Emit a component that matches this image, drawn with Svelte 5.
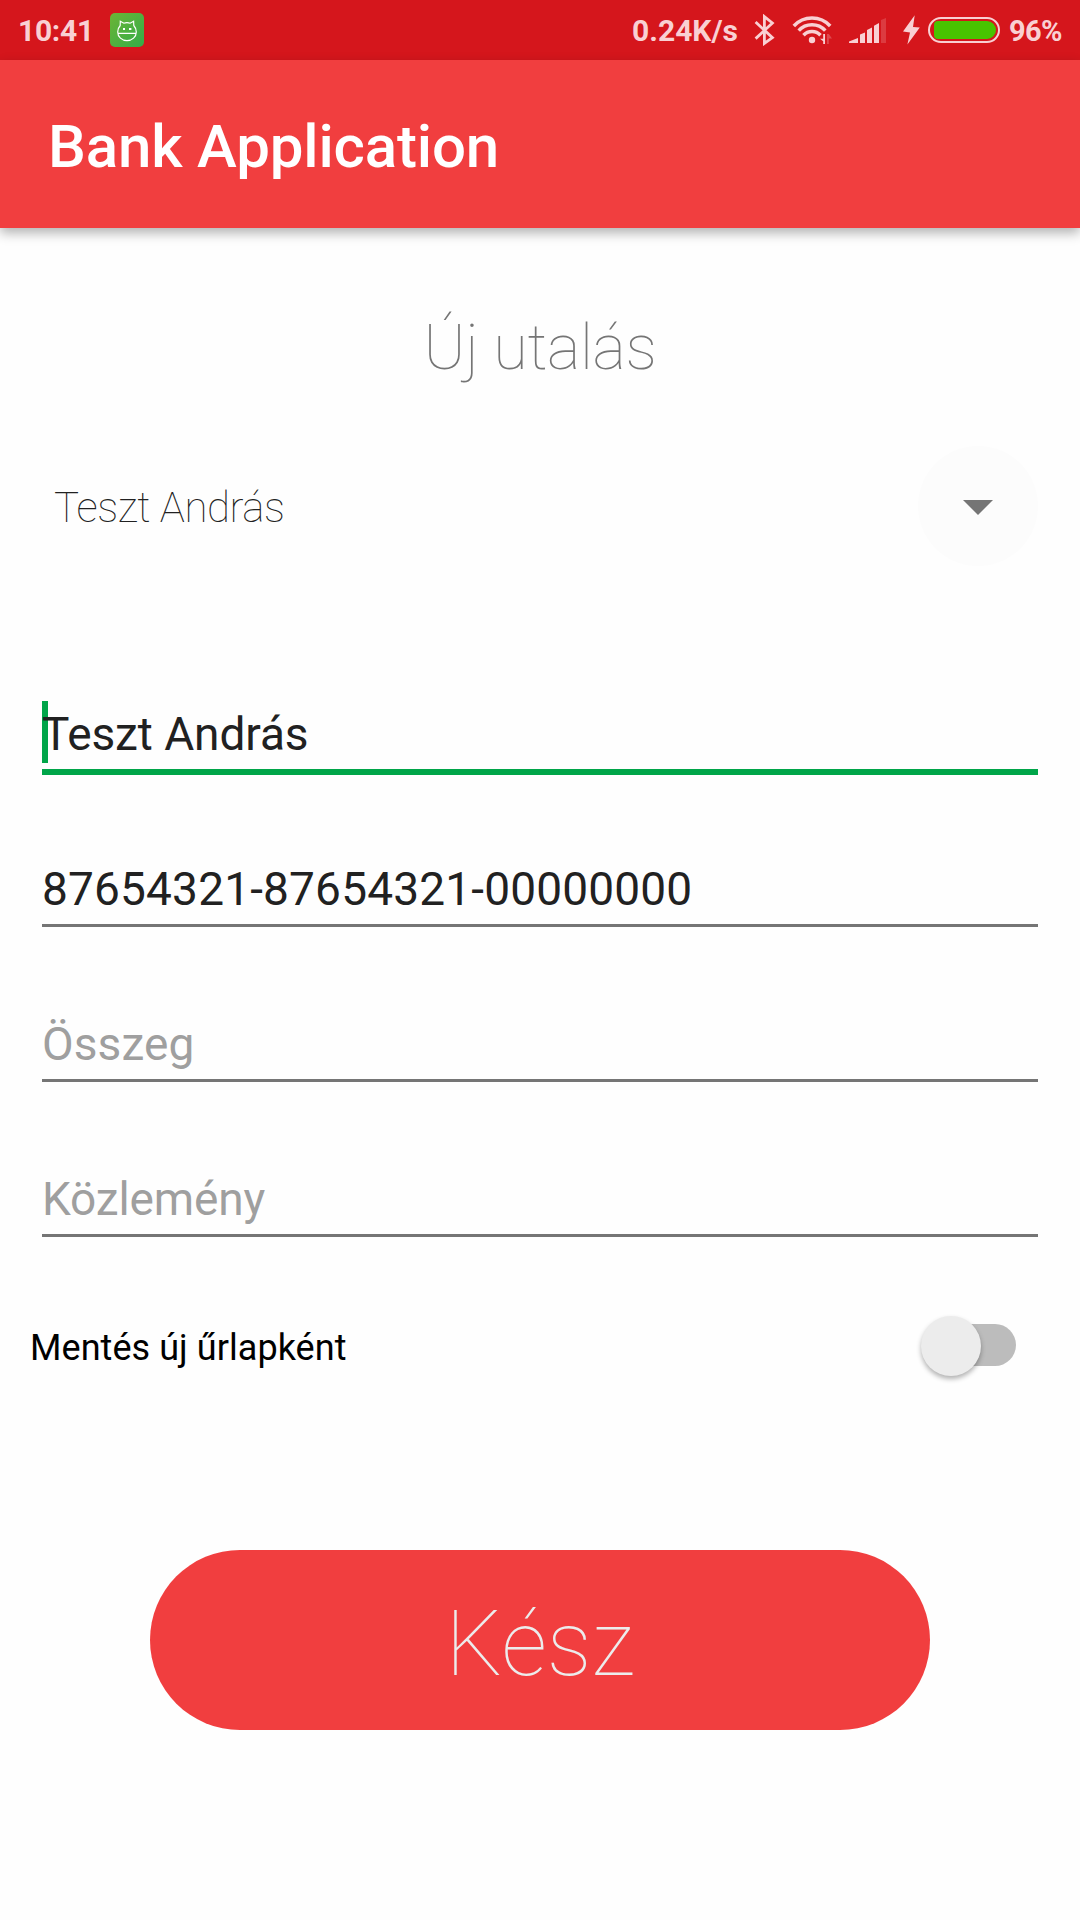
<script>
  let recipient = $state('Teszt András');
  let account = $state('87654321-87654321-00000000');
  let amount = $state('');
  let note = $state('');
</script>

<div class="screen">
  <header class="status">
    <span class="clock">10:41</span>
    <svg class="app" width="34" height="34" viewBox="0 0 34 34">
      <defs>
        <linearGradient id="leaf" x1="0" y1="0" x2="1" y2="1">
          <stop offset="0" stop-color="#6cb436" />
          <stop offset="1" stop-color="#34ad48" />
        </linearGradient>
      </defs>
      <rect width="34" height="34" rx="5" fill="url(#leaf)" />
      <path d="M10.2 12.5 L10.3 8.2 L13.8 10.2 Q17 9.2 20.2 10.2 L23.6 8.2 L23.8 12.5 Q26.4 15.5 26.3 19 A9.3 8.6 0 0 1 7.7 19 Q7.6 15.5 10.2 12.5 Z M8 20.3 H26" fill="none" stroke="#fff" stroke-width="1.2" />
      <path d="M13 15 h2 v2 h-2 z M19 15 h2.4 v2 h-2.4 z" fill="#fff" />
    </svg>
    <span class="speed">0.24K/s</span>
    <svg class="bt" width="22" height="32" viewBox="0 0 22 32">
      <path d="M1.6 8 L18.4 23.6 L10.4 29.4 V2.6 L18.4 9 L1.6 24.6" fill="none" stroke="currentColor" stroke-width="2.8" />
    </svg>
    <svg class="wifi" width="42" height="30" viewBox="0 0 42 30">
      <g fill="none" stroke="currentColor" stroke-width="3.5">
        <path d="M1.8 11 A24.7 24.7 0 0 1 38.2 11" />
        <path d="M6.7 15.6 A18 18 0 0 1 33.3 15.6" />
        <path d="M11.5 20.2 A11.5 11.5 0 0 1 28.5 20.2" />
      </g>
      <circle cx="20" cy="25" r="3.2" fill="currentColor" />
      <path d="M31.2 19 H33 V29 H31.2 V26.2 L28 23.8 H31.2 Z" fill="currentColor" />
      <path d="M35 19 H36.8 L40 23.4 H36.8 V29 H35 Z" fill="currentColor" opacity=".28" />
    </svg>
    <svg class="signal" width="38" height="26" viewBox="0 0 38 26">
      <path d="M0 25 V23.6 L9 20 V25 Z M11 25 V16.5 L16 14.5 V25 Z M18 25 V12 L23 9.5 V25 Z M25 25 V7.7 L30 5 V25 Z" fill="currentColor" />
      <path d="M32 25 V2 L37 0 V25 Z" fill="currentColor" opacity=".2" />
    </svg>
    <svg class="bolt" width="17" height="30" viewBox="0 0 17 30">
      <path d="M11.7 .3 L0 16.6 L7 17.4 L4.4 29.6 L16.8 12.6 L10 12 Z" fill="currentColor" />
    </svg>
    <div class="battery"><div class="charge"></div></div>
    <span class="percent">96%</span>
  </header>

  <div class="appbar">Bank Application</div>

  <main>
    <h1>Új utalás</h1>

    <div class="spinner">
      <span>Teszt András</span>
      <div class="drop">
        <svg width="30" height="15" viewBox="0 0 30 15"><path d="M0 0 H30 L15 15 Z" fill="#757575" /></svg>
      </div>
    </div>

    <div class="fields">
      <div class="field active">
        <i class="cursor"></i>
        <input bind:value={recipient} />
      </div>
      <div class="field"><input class="account" bind:value={account} /></div>
      <div class="field"><input class="amount" placeholder="Összeg" bind:value={amount} /></div>
      <div class="field"><input class="note" placeholder="Közlemény" bind:value={note} /></div>
    </div>

    <div class="save">
      <span>Mentés új űrlapként</span>
      <div class="switch"><div class="thumb"></div></div>
    </div>

    <button>Kész</button>
  </main>
</div>

<style>
  :global(body) { background: #fefefe; }
  .screen {
    width: 1080px;
    height: 1920px;
    overflow: hidden;
    background: #fefefe;
    font-family: Roboto, sans-serif;
    display: flex;
    flex-direction: column;
  }
  svg { display: block; flex: none; }

  .status {
    height: 60px;
    flex: none;
    box-sizing: border-box;
    padding: 0 19px 0 18px;
    display: flex;
    align-items: center;
    background: #d5161c;
    color: #f9d0d3;
    font-size: 30px;
    font-weight: 700;
    line-height: 58px;
    white-space: nowrap;
  }
  .status span { padding-top: 2px; }
  .clock { width: 92px; letter-spacing: -0.3px; }
  .speed { margin-left: auto; width: 106px; }
  .bt { margin-left: 16px; margin-right: 1px; }
  .wifi { margin-left: 15px; }
  .signal { margin: 2px 0 0 15px; }
  .bolt { margin-left: 16px; margin-right: 1px; }
  .battery {
    box-sizing: border-box;
    width: 72px;
    height: 26px;
    margin-left: 7px;
    padding: 2px 2px 2px 4px;
    border: 2px solid #f9d0d3;
    border-radius: 13px;
    flex: none;
  }
  .charge {
    height: 18px;
    background: #48c400;
    border-radius: 4px 9px 9px 4px;
  }
  .percent {
    width: 52px;
    margin-left: 9px;
    font-size: 29px;
    letter-spacing: -0.7px;
  }

  .appbar {
    height: 168px;
    flex: none;
    box-sizing: border-box;
    padding: 5px 48px 0;
    background: #f13e3f;
    color: #fff;
    font-size: 60px;
    font-weight: 500;
    letter-spacing: -0.15px;
    line-height: 163px;
    box-shadow: 0 5px 11px rgba(0, 0, 0, .3);
  }

  main { display: flex; flex-direction: column; }
  h1 {
    margin: 80px 0 0;
    font-size: 63px;
    font-weight: 100;
    line-height: 80px;
    letter-spacing: -0.35px;
    text-align: center;
    color: #757575;
  }
  .spinner {
    height: 120px;
    margin: 58px 42px 0 54px;
    display: flex;
    align-items: center;
    justify-content: space-between;
    font-size: 42px;
    font-weight: 100;
    letter-spacing: -0.46px;
    color: #212121;
  }
  .spinner span { padding-top: 3px; }
  .drop {
    width: 120px;
    height: 120px;
    border-radius: 50%;
    background: #fcfcfc;
    display: grid;
    place-items: center;
  }
  .drop svg { margin-top: 3px; }

  .fields {
    margin: 51px 42px 0;
    display: grid;
    grid-auto-rows: 155px;
  }
  .field {
    position: relative;
    box-sizing: border-box;
    padding-bottom: 4px;
    border-bottom: 3px solid #757575;
    display: flex;
    align-items: flex-end;
  }
  .field.active {
    margin-bottom: -3px;
    border-bottom: 6px solid #00a549;
  }
  .cursor {
    position: absolute;
    left: 0;
    bottom: 6px;
    width: 6px;
    height: 62px;
    background: #00a549;
  }
  input {
    position: relative;
    width: 100%;
    height: 62px;
    padding: 0;
    border: 0;
    outline: 0;
    background: transparent;
    font: 400 46px/62px Roboto, sans-serif;
    letter-spacing: -0.08px;
    color: #212121;
  }
  input::placeholder { color: #9f9f9f; opacity: 1; }
  .account { letter-spacing: 0.17px; }
  .amount { letter-spacing: 0.1px; }
  .note { letter-spacing: -0.15px; }

  .save {
    height: 60px;
    margin: 78px 64px 0 30px;
    display: flex;
    align-items: center;
    justify-content: space-between;
    font-size: 36px;
    letter-spacing: 0.06px;
    color: #000;
  }
  .save span { padding-top: 6px; }
  .switch {
    width: 96px;
    height: 60px;
    display: flex;
    align-items: center;
  }
  .switch::after {
    content: '';
    width: 76px;
    height: 42px;
    margin-left: -41px;
    border-radius: 21px;
    background: #bcbcbc;
  }
  .thumb {
    position: relative;
    z-index: 1;
    flex: none;
    width: 60px;
    height: 60px;
    margin: 1px 0 0 1px;
    border-radius: 50%;
    background: #ececec;
    box-shadow: 0 3px 5px rgba(0, 0, 0, .3);
  }

  button {
    align-self: center;
    width: 780px;
    height: 180px;
    margin-top: 175px;
    padding: 9px 0 0;
    border: 0;
    border-radius: 90px;
    background: #f13e3f;
    color: #ececec;
    font: 100 90px/171px Roboto, sans-serif;
  }
</style>
